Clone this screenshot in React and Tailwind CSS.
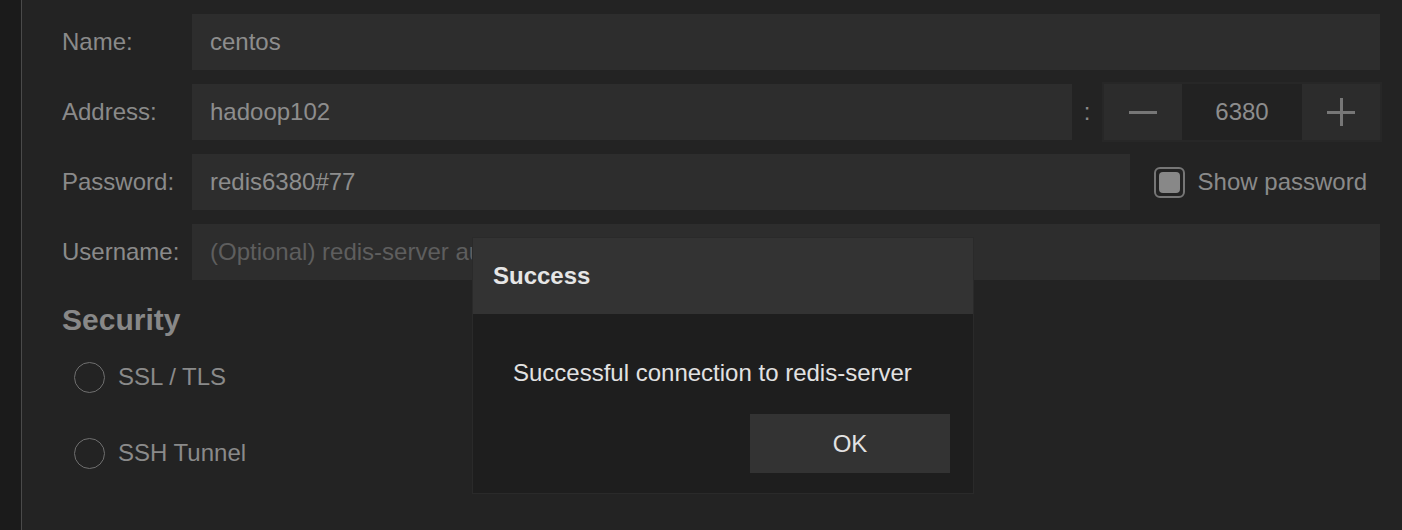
import { useState } from 'react';

const font = { fontFamily: '"Liberation Sans", Arial, sans-serif' };

const Row = ({ label, children, className = '' }) => (
  <div className={`flex items-center ${className}`}>
    <div className="w-[130px] shrink-0 text-[24px] text-[#8a8a8a]">{label}</div>
    {children}
  </div>
);

const Field = ({ value, placeholder, className = '' }) => (
  <div className={`h-[56px] bg-[#2d2d2d] flex items-center pl-[18px] text-[24px] overflow-hidden whitespace-nowrap ${className}`}>
    {value ? (
      <span className="text-[#8d8d8d]">{value}</span>
    ) : (
      <span className="text-[#5e5e5e]">{placeholder}</span>
    )}
  </div>
);

const Radio = ({ label }) => (
  <div className="flex items-center gap-[13px] h-[40px] ml-[12px]">
    <div className="w-[31px] h-[31px] rounded-full border-[1.5px] border-[#6f6f6f]" />
    <span className="text-[24px] text-[#8a8a8a]">{label}</span>
  </div>
);

export default function App() {
  const [showPassword, setShowPassword] = useState(true);

  return (
    <div className="flex h-[530px] w-full overflow-hidden" style={font}>
      <div className="w-[22px] shrink-0 bg-[#1b1b1b] border-r border-[#4a4a4a]" />

      <div className="relative flex-1 bg-[#232323] pl-[40px] pr-[22px] pt-[14px]">
        <div className="flex flex-col gap-[14px]">
          <Row label="Name:">
            <Field value="centos" className="flex-1" />
          </Row>

          <Row label="Address:">
            <Field value="hadoop102" className="flex-1" />
            <div className="w-[30px] text-center text-[24px] text-[#8a8a8a]">:</div>
            <div className="flex h-[60px] w-[280px] -my-[2px] -mr-[2px] bg-[#2c2c2c] border-2 border-[#272727]">
              <button className="w-[78px] flex items-center justify-center">
                <span className="block w-[28px] h-[3px] bg-[#777]" />
              </button>
              <div className="w-[120px] bg-[#222222] flex items-center justify-center text-[24px] text-[#8d8d8d]">
                6380
              </div>
              <button className="flex-1 relative flex items-center justify-center">
                <span className="block w-[28px] h-[3px] bg-[#777]" />
                <span className="absolute w-[3px] h-[28px] bg-[#777]" />
              </button>
            </div>
          </Row>

          <Row label="Password:">
            <Field value="redis6380#77" className="flex-1" />
            <button
              onClick={() => setShowPassword(!showPassword)}
              className="ml-[24px] mr-[13px] flex items-center gap-[13px]"
            >
              <span className="w-[31px] h-[31px] rounded-[6px] border-2 border-[#767676] flex items-center justify-center">
                {showPassword && <span className="w-[21px] h-[21px] rounded-[4px] bg-[#888]" />}
              </span>
              <span className="text-[24px] text-[#8a8a8a]">Show password</span>
            </button>
          </Row>

          <Row label="Username:">
            <Field placeholder="(Optional) redis-server authentication username" className="flex-1" />
          </Row>
        </div>

        <h2 className="mt-[22px] h-[36px] leading-[36px] text-[30px] font-bold text-[#888]">Security</h2>

        <div className="mt-[19px] flex flex-col gap-[36px]">
          <Radio label="SSL / TLS" />
          <Radio label="SSH Tunnel" />
        </div>

        {/* modal */}
        <div className="absolute left-[450px] top-[237px] w-[502px] h-[257px] bg-[#1e1e1e] border border-[#2a2a2a] flex flex-col">
          <div className="h-[76px] bg-[#333333] flex items-center pl-[20px] text-[24px] font-bold text-[#e6e6e6]">
            Success
          </div>
          <div className="pl-[40px] pt-[45px] h-[28px] box-content leading-[28px] text-[24px] text-[#e2e2e2]">
            Successful connection to redis-server
          </div>
          <div className="flex justify-end pr-[23px] mt-[27px]">
            <button className="w-[200px] h-[59px] bg-[#333333] text-[24px] text-[#e2e2e2]">OK</button>
          </div>
        </div>
      </div>
    </div>
  );
}
